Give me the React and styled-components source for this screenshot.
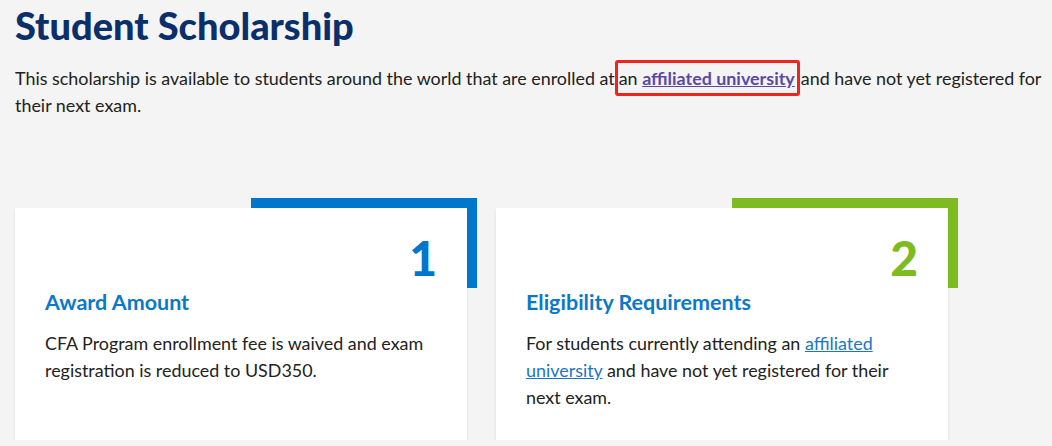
import React from 'react';
import styled, { createGlobalStyle } from 'styled-components';

const GlobalStyle = createGlobalStyle`
    html, body {
        margin: 0;
        background: #f4f4f4;
    }
    body {
        font-family: Lato, "Open Sans", sans-serif;
        color: #222;
    }
`

const App = () => {
    const cards = [
        {
            num: '1',
            color: '#0077cc',
            title: 'Award Amount',
            body: <>CFA Program enrollment fee is waived and exam registration is reduced to USD350.</>,
        },
        {
            num: '2',
            color: '#7dbb21',
            title: 'Eligibility Requirements',
            body: <>For students currently attending an <CardLink href="#">affiliated university</CardLink> and have not yet registered for their next exam.</>,
        },
    ]

    return (
        <Page>
            <GlobalStyle />
            <Title>Student Scholarship</Title>
            <Intro>
                This scholarship is available to students around the world that are enrolled at
                <Marked>an <VisitedLink href="#">affiliated university</VisitedLink></Marked>
                and have not yet registered for their next exam.
            </Intro>
            <CardRow>
                {cards.map(c => (
                    <Card key={c.num} $accent={c.color}>
                        <Num $accent={c.color}>{c.num}</Num>
                        <CardTitle>{c.title}</CardTitle>
                        <CardText>{c.body}</CardText>
                    </Card>
                ))}
            </CardRow>
        </Page>
    )
}

export default App

const Page = styled.div`
    padding: 0 6px 0 15px;
`

const Title = styled.h1`
    margin: 0;
    padding-top: 1px;
    font-size: 38px;
    line-height: 48px;
    font-weight: 900;
    color: #0a2f6b;
`

const Intro = styled.p`
    margin: 16px 0 0;
    font-size: 17.9px;
    line-height: 27px;
    color: #222;
`

const Marked = styled.span`
    border: 3px solid #f2231b;
    border-radius: 3px;
    padding: 4px 2px 4px 1px;
    margin: 0 1px 0 0;
`

const VisitedLink = styled.a`
    color: #5b49a8;
    font-weight: 700;
    text-decoration: underline;
`

const CardLink = styled.a`
    color: #1a76c8;
    text-decoration: underline;
`

const CardRow = styled.div`
    display: flex;
    gap: 29px;
    margin-top: 89px;
`

const Card = styled.div`
    position: relative;
    width: 452px;
    height: 232px;
    box-sizing: border-box;
    background: #fff;
    padding: 30px 30px 0;
    box-shadow: 0 2px 3px rgba(0, 0, 0, 0.1);

    &::before {
        content: '';
        position: absolute;
        top: -10px;
        right: -10px;
        width: 216px;
        height: 80px;
        border-top: 10px solid ${p => p.$accent};
        border-right: 10px solid ${p => p.$accent};
    }
`

const Num = styled.div`
    text-align: right;
    font-size: 48px;
    line-height: 40px;
    font-weight: 900;
    color: ${p => p.$accent};
`

const CardTitle = styled.h3`
    margin: 10px 0 0;
    font-size: 21.5px;
    line-height: 28px;
    font-weight: 700;
    color: #0a78cc;
`

const CardText = styled.p`
    margin: 14px 0 0;
    font-size: 17.9px;
    line-height: 27px;
    color: #222;
`
